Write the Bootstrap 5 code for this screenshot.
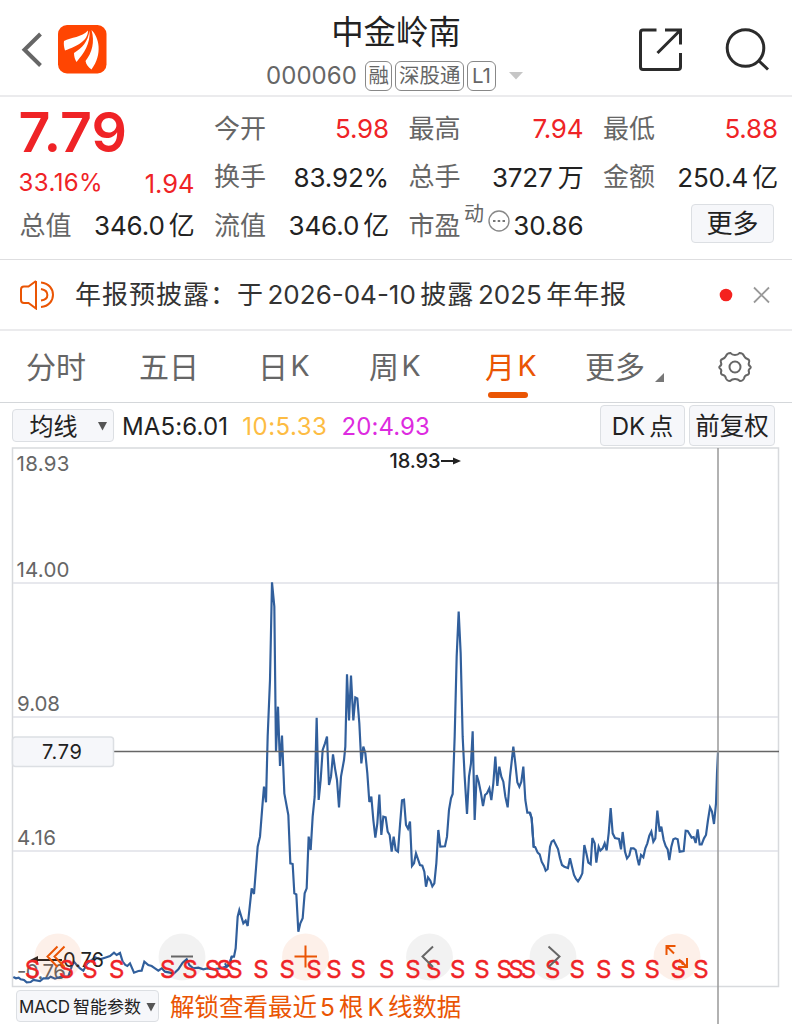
<!DOCTYPE html>
<html lang="zh-CN">
<head>
<meta charset="utf-8">
<meta name="viewport" content="width=device-width, initial-scale=1">
<title>中金岭南 000060</title>
<link href="https://cdn.jsdelivr.net/npm/bootstrap@5.3.0/dist/css/bootstrap.min.css" rel="stylesheet">
<style>
body{font-family:Inter,"Noto Sans CJK SC",sans-serif;color:#222;background:#fff;width:792px;height:1024px;overflow:hidden;line-height:1}
svg{display:block;flex:none}
svg text{font-family:Inter,"Noto Sans CJK SC",sans-serif}
.topbar{height:97px;border-bottom:2px solid #ebebed;padding:4px 22px 0 20px}
.title-col{width:266px;padding-top:5px}
.stock-name{font-size:32.4px;line-height:40px;margin-left:-6px}
.stock-code{font-size:24px;color:#666;letter-spacing:.05px;margin-right:8px}
.chip{border:1.5px solid #888;border-radius:6px;height:30px;font-size:20.5px;color:#666;line-height:27px;padding:0 2.5px;margin-right:3px;white-space:nowrap}
.quotes{height:163px;border-bottom:1px solid #dedee0;display:grid;grid-template-columns:175px 175px 175px 175px;column-gap:19.5px;grid-template-rows:49px 48.5px 48.5px;padding:7px 0 0 19.5px}
.quotes>div{display:flex;align-items:center;justify-content:space-between;white-space:nowrap}
.lab{font-size:26px;color:#666}
.val{font-size:26px;letter-spacing:-.15px;padding-top:1px}
.up{color:#ef2326}
.price{font-size:55.5px;font-weight:600;padding-top:6px;margin-left:-1px}
.btn-soft{background:#f6f7fa;border:1.5px solid #dcdfe3;border-radius:4px;color:#222;display:flex;align-items:center;justify-content:center;white-space:nowrap;padding:2px 0 0}
.notice{height:71px;border-bottom:2px solid #ebebed;padding:1px 21px 0 20px}
.notice-text{font-size:26px;letter-spacing:1px;color:#333;margin-left:21px;white-space:nowrap}
.notice-text span{margin:0 4.5px 0 3.5px;letter-spacing:0}
.tabs{height:72px;border-bottom:1.5px solid #d4d7da;font-size:30px;color:#666}
.tabs>div{position:relative;height:100%;display:flex;align-items:center;white-space:nowrap}
.tabs span{font-size:28.5px;margin-left:2.5px}
.tabs .on{color:#ea5504}
.tabs .on::after{content:"";position:absolute;left:3px;bottom:4.500px;width:40px;height:6px;border-radius:3px;background:#ea5504}
.indic{height:45px;padding:0 17px 0 12px;font-size:24px}
.ma{padding-top:2px}
.chart{height:539px}
.foot{height:37px;padding:2px 0 0 16px}
.unlock{font-size:24.5px;color:#ea5504;margin-left:11px;padding-top:2px;white-space:nowrap}
</style>
</head>
<body>
<header class="topbar d-flex align-items-center">
  <svg width="90" height="60" viewBox="20 20 90 60"><path d="M40.500 34L24.500 49.800L40.500 65.500" fill="none" stroke="#666" stroke-width="4"/><rect x="58" y="25" width="48.500" height="48.500" rx="9" fill="#ff4502"/><path d="M64 41C71 37.500 82 37 88 30.500C88 41 77 46 65 50.500C64 47 63.500 44 64 41ZM89.500 30.500C90.500 44 84 53 76.500 62C75 59.500 74 56.500 74 53C82 48 88 42 89.500 30.500ZM91.500 30C99 37 103 54 91.500 69.500C88.500 67.500 86 64.500 85.500 61C92 53 95 42 91.500 30Z" fill="#fff"/></svg>
  <div class="title-col ms-auto d-flex flex-column" style="margin-right:106px">
    <div class="stock-name text-center">中金岭南</div>
    <div class="d-flex align-items-center mt-2">
      <span class="stock-code">000060</span><span class="chip">融</span><span class="chip">深股通</span><span class="chip px-1">L1</span>
      <svg style="margin-left:10px" width="14" height="8" viewBox="0 0 14 8"><path d="M0 0H14L7 7.500Z" fill="#c6c6c6"/></svg>
    </div>
  </div>
  <svg width="132" height="50" viewBox="638 25 132 50" fill="none" stroke="#2b2b2b" stroke-width="3"><path d="M656.500 30H643Q640.500 30 640.500 32.500V67Q640.500 69.500 643 69.500H678Q680.500 69.500 680.500 67V53M665 30H680.500V44.500M680 30.500L657.500 53"/><circle cx="745.500" cy="48" r="18.300"/><path d="M758 60L768 69.500"/></svg>
</header>

<section class="quotes">
  <div><span class="price up">7.79</span></div>
  <div><span class="lab">今开</span><span class="val up">5.98</span></div>
  <div><span class="lab">最高</span><span class="val up">7.94</span></div>
  <div><span class="lab">最低</span><span class="val up">5.88</span></div>
  <div style="padding-top:11px"><span class="up" style="font-size:24px;letter-spacing:.4px;margin-left:-1px">33.16%</span><span class="up" style="font-size:25.500px;padding-top:2px">1.94</span></div>
  <div><span class="lab">换手</span><span class="val">83.92%</span></div>
  <div><span class="lab">总手</span><span class="val">3727<span style="margin-left:5px">万</span></span></div>
  <div><span class="lab">金额</span><span class="val">250.4<span class="ms-1">亿</span></span></div>
  <div><span class="lab">总值</span><span class="val">346.0<span class="ms-1">亿</span></span></div>
  <div><span class="lab">流值</span><span class="val">346.0<span class="ms-1">亿</span></span></div>
  <div><span class="lab">市盈</span><span class="align-self-start" style="font-size:20px;color:#666;padding-top:2px">动</span><svg width="22" height="22" viewBox="0 0 22 22" style="margin-bottom:9px"><circle cx="11" cy="11" r="10" fill="none" stroke="#888" stroke-width="1.400"/><path d="M5 11h2.500M9.700 11h2.500M14.500 11H17" stroke="#777" stroke-width="2.200"/></svg><span class="val">30.86</span></div>
  <div class="justify-content-end"><span class="btn-soft" style="width:83px;height:39px;font-size:26px;margin:-5px 4px 0 0">更多</span></div>
</section>

<section class="notice d-flex align-items-center">
  <svg width="34" height="30" viewBox="20 280 34 30" fill="none" stroke="#ea5504" stroke-width="2"><path d="M36 281V308.500L28.500 303H24Q21 303 21 300V289.500Q21 286.500 24 286.500H28.500L36 281M41 282.500C57 284 57 305.500 41 307M41 289C49.500 290.500 49.500 299.500 41 300.500"/></svg>
  <span class="notice-text">年报预披露：于<span>2026-04-10</span>披露<span>2025</span>年年报</span>
  <svg class="ms-auto" width="52" height="20" viewBox="0 0 52 20"><circle cx="7" cy="10" r="6.300" fill="#f4221f"/><path d="M35 2.500L50 17.500M50 2.500L35 17.500" stroke="#999" stroke-width="1.800"/></svg>
</section>

<nav class="tabs d-flex">
  <div style="margin-left:26px;width:113px">分时</div><div style="width:119px">五日</div><div style="width:111px">日<span>K</span></div><div style="width:116px">周<span>K</span></div><div class="on" style="width:100px">月<span>K</span></div><div style="width:133px">更多<svg style="margin:22px 0 0 10px" width="9" height="9" viewBox="0 0 9 9"><path d="M9 0V9H0Z" fill="#777"/></svg></div>
  <div><svg width="34" height="32" viewBox="-17 -16 34 32" fill="none" stroke="#666" stroke-width="2"><circle r="5.500"/><path d="M-4.500-14Q-8-14-9-11Q-10-9-12.500-8Q-15-7-14-4.500Q-13-2-15-1Q-16.500 0-15 1.500Q-13 3-14 5Q-14.500 7.500-12 8Q-9.500 8.500-9 11.500Q-8 14-5 14Q-3 12 0 12Q3 12 5 14Q8 14 9 11.500Q9.500 8.500 12 8Q14.500 7.500 14 5Q13 3 15 1.500Q16.500 0 15-1Q13-2 14-4.500Q15-7 12.500-8Q10-9 9-11Q8-14 4.500-14Q3-12 0-12Q-3-12-4.500-14Z"/></svg></div>
</nav>

<section class="indic d-flex align-items-center">
  <div class="btn-soft" style="width:102px;height:33px;padding-left:10px">均线<svg width="9" height="9" viewBox="0 0 9 9" style="margin-left:20px"><path d="M0 0H9L4.500 8.500Z" fill="#555"/></svg></div>
  <span class="ma" style="margin-left:8px;letter-spacing:.15px">MA5:6.01</span><span class="ma" style="color:#fdbc43;margin-left:14px;letter-spacing:.5px">10:5.33</span><span class="ma" style="color:#dd2be0;margin-left:14px;letter-spacing:.1px">20:4.93</span>
  <div class="btn-soft ms-auto" style="width:85px;height:41px">DK<span style="margin-left:4px">点</span></div>
  <div class="btn-soft" style="width:86px;height:41px;margin-left:4px;font-size:24.500px">前复权</div>
</section>

<section class="chart">
<svg width="792" height="576" viewBox="0 448 792 576" style="overflow:visible">
  <g fill="none" stroke="#e0e1e7" stroke-width="1.500"><path d="M12.500 986.500V448H778.500V986.500Z" stroke="#d8dadd"/><path d="M13 583H778M13 717H778M13 851H778"/></g>
  <g font-size="20.500" fill="#666"><text x="16.500" y="470.500" textLength="53">18.93</text><text x="16.500" y="576.500" textLength="53">14.00</text><text x="17" y="711" textLength="43">9.08</text><text x="17" y="845" textLength="39">4.16</text><text x="17" y="979" textLength="49">-0.76</text></g>
  <g fill="none" stroke="#315f9c" stroke-width="6.500" stroke-linejoin="miter">
    <path transform="translate(0 900) scale(.33333)" d="M40 231L48 235L56 233L62 238L72 240L80 247L92 246L100 240L120 243L130 235L145 235L152 230L165 236L180 231L205 229L215 200L222 185L230 195L240 205L250 212L262 190L275 180L285 172L300 178L315 173L330 168L342 158L350 165L360 159L368 185L376 195L382 198L390 190L402 218L415 213L425 212L433 185L445 195L455 198L465 205L475 212L485 205L495 215L510 218L520 222L535 208L548 188L560 178L568 195L580 205L595 203L610 208L622 205L640 208L660 205L680 200L690 190L695 170"/>
    <path transform="translate(225 570) scale(.33333)" d="M0 1180L5 1190L12 1185L20 1160H27L32 1135L38 1040L43 1020L55 1060L62 1052L68 1068L80 955L87 972L98 830L105 800L112 710L117 650L123 697L128 500L135 330L141 37L148 110L153 545L159 410L165 588L171 497L178 670L190 735L196 880L203 882L208 970L214 973L220 1085L226 1060L233 1045L239 970L245 955L251 800L257 840L263 740L269 680L275 443L281 690L287 630L293 540L300 520L306 500L312 645L318 620L324 553L330 595L336 630L342 712L348 620L357 570L361 530L366 313L372 451L378 317L385 451L391 382L397 385L403 460L409 580L415 530L421 550L427 610L433 696L439 680L445 750L451 803L457 760L463 674L469 795L475 740L482 742L488 785L494 795L500 845L506 800L512 840L519 845L525 765L531 691L537 689L543 765L549 776L555 755L561 888L567 880L573 850L585 885L592 887L598 905L603 950L609 922L616 932L622 949L628 940L634 880L640 780L646 830L660 829L666 800L672 720L678 685L683 672L689 500L695 260L701 125L707 250L713 500L719 620L726 732L732 620L738 580L743 484L749 750L755 615L761 635L768 670L774 708L780 675L786 670L793 655L799 690L805 640L811 560L817 648L823 590L829 620L835 635L841 680L848 712L855 620L865 530L871 580L877 637L883 650L889 635L895 590L901 690L907 728H914L920 745L926 830L932 832"/>
    <path transform="translate(530 740) scale(.33333)" d="M0 217L5 235L11 320L16 322L23 338L29 343L35 365L42 378L47 392L53 387L60 320L65 305L71 301L78 315L84 327L90 355L96 375L103 380L114 384L120 355L126 380L132 405L138 417L144 424L151 413L157 400L163 315L169 340L175 368L182 373L187 294L194 310L199 368L206 320L211 332L218 325L224 310L230 331L236 280L242 204L248 280L255 294L267 297L273 328L278 276L285 335L291 355L298 346L303 325H311L317 330L322 355L327 376L333 345L340 352L346 325L352 310L358 287L364 275L370 305L376 295L382 212L389 275L394 260L401 300L407 318L413 328L418 360L424 320L430 298L436 295L443 298L449 335L461 333L467 272L473 273L485 293L491 291L497 309L503 268L509 313H515L522 295L528 285L534 240L540 202L546 215L552 252L558 190L561 100L564 37"/>
  </g>
  <path d="M113 751.500H779" stroke="#666" stroke-width="1.600"/><path d="M718 448V1024" stroke="#999" stroke-width="1.500"/>
  <rect x="12.500" y="737" width="101" height="29.500" rx="3" fill="#f6f7fa" stroke="#dcdfe3" stroke-width="1.500"/><text x="42" y="759" font-size="20" fill="#222" textLength="40">7.79</text>
  <g font-size="20" font-weight="500" fill="#222"><text x="389.500" y="468" textLength="51">18.93</text><text x="63" y="967" font-weight="400" textLength="41">0.76</text></g>
  <path d="M441 461H457M34 960H62" stroke="#222" stroke-width="1.800"/><path d="M461 461L453 457.500V464.500ZM30 960L38 956V964Z" fill="#222"/>
  <g fill="#ea5504" fill-opacity=".085"><circle cx="58" cy="957" r="23.500"/><circle cx="305.500" cy="957" r="23.500"/><circle cx="677" cy="957" r="23.500"/></g>
  <g fill="#000" fill-opacity=".05"><circle cx="182" cy="957" r="23.500"/><circle cx="429.500" cy="957" r="23.500"/><circle cx="553" cy="957" r="23.500"/></g>
  <g id="sell" font-size="24" fill="#ef2326" stroke="#ef2326" stroke-width=".4" text-anchor="middle"></g>
  <g fill="none" stroke="#ea5504" stroke-width="2"><path d="M57.500 946.500L47.500 956.500L57.500 967M64.500 946.500L54.500 956.500L64.500 967M294.500 956.500H317M305.500 945.500V967.500M666.500 955V946H675.500M666.500 946L674 953.500M687 958V967H678M687 967L679 959.500"/><path d="M171 956.500H193M433 946.500L422.500 956.500L433 967M548.500 946.500L559.500 956.500L548.500 967" stroke="#666"/></g>
</svg>
</section>

<footer class="foot d-flex align-items-center">
  <div class="btn-soft" style="width:143px;height:32px;font-size:17px;margin-top:-1px">MACD<span style="margin-left:3px">智能参数</span><svg width="10" height="9" viewBox="0 0 9 9" style="margin-left:5px"><path d="M0 0H9L4.500 8.500Z" fill="#555"/></svg></div>
  <span class="unlock">解锁查看最近<span style="margin:0 4px 0 3px">5</span>根<span class="mx-1">K</span>线数据</span>
</footer>
<script>
// Sell markers along the bottom of the chart
const marks=[32.5,66.5,90,116.7,167.7,190,212.5,224,235,261,287.3,314,334,358.3,386.7,413,433.7,457.7,482,504.3,516,528.5,552.7,577.3,603.7,628,652.3,678.3,701];
document.getElementById('sell').innerHTML=marks.map(x=>`<text x="${x}" y="978">S</text>`).join('');
</script>
<script src="https://cdn.jsdelivr.net/npm/bootstrap@5.3.0/dist/js/bootstrap.bundle.min.js"></script>
</body>
</html>
